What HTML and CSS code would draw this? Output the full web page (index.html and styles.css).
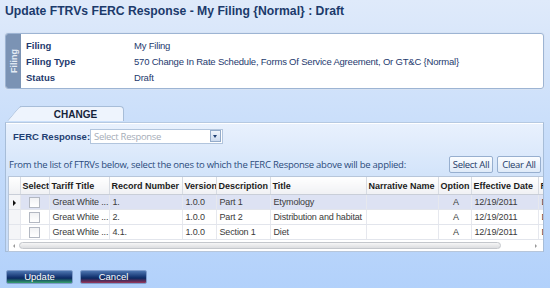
FILE: index.html
```html
<!DOCTYPE html>
<html lang="en">
<head>
    <meta charset="UTF-8">
    <title>Update FTRVs FERC Response</title>
    <link rel="stylesheet" href="styles.css">
</head>
<body>
    <div class="page">
        <h1 class="page-title">Update FTRVs FERC Response - My Filing {Normal} : Draft</h1>

        <!-- filing summary -->
        <div class="filing-box">
            <div class="filing-side"><span>Filing</span></div>
            <div class="filing-info">
                <div class="info-row"><span class="info-label">Filing</span><span class="info-value">My Filing</span></div>
                <div class="info-row"><span class="info-label">Filing Type</span><span class="info-value">570 Change In Rate Schedule, Forms Of Service Agreement, Or GT&amp;C {Normal}</span></div>
                <div class="info-row"><span class="info-label">Status</span><span class="info-value">Draft</span></div>
            </div>
        </div>

        <!-- change tab -->
        <div class="tabs">
            <div class="tab">CHANGE</div>
        </div>
        <div class="tab-panel">
            <div class="ferc-row">
                <label class="ferc-label">FERC Response:</label>
                <div class="select">
                    <span class="select-text">Select Response</span>
                    <span class="select-btn"></span>
                </div>
            </div>

            <div class="hint-row">
                <span class="hint">From the list of FTRVs below, select the ones to which the FERC Response above will be applied:</span>
                <div class="hint-btns">
                    <button class="light-btn">Select All</button>
                    <button class="light-btn">Clear All</button>
                </div>
            </div>

            <div class="grid-wrap">
                <div class="grid-clip">
                    <table class="grid">
                        <colgroup>
                            <col style="width:11px">
                            <col style="width:29px">
                            <col style="width:60px">
                            <col style="width:73px">
                            <col style="width:34px">
                            <col style="width:54px">
                            <col style="width:96px">
                            <col style="width:72px">
                            <col style="width:33px">
                            <col style="width:67px">
                            <col style="width:40px">
                        </colgroup>
                        <thead>
                            <tr>
                                <th></th>
                                <th>Select</th>
                                <th>Tariff Title</th>
                                <th>Record Number</th>
                                <th>Version</th>
                                <th>Description</th>
                                <th>Title</th>
                                <th>Narrative Name</th>
                                <th>Option</th>
                                <th>Effective Date</th>
                                <th>Reason</th>
                            </tr>
                        </thead>
                        <tbody>
                            <tr class="current">
                                <td class="ind"><span class="arrow"></span></td>
                                <td class="chk"><span class="box"></span></td>
                                <td>Great White ...</td>
                                <td>1.</td>
                                <td>1.0.0</td>
                                <td>Part 1</td>
                                <td>Etymology</td>
                                <td></td>
                                <td class="mid">A</td>
                                <td>12/19/2011</td>
                                <td>D</td>
                            </tr>
                            <tr>
                                <td class="ind"></td>
                                <td class="chk"><span class="box"></span></td>
                                <td>Great White ...</td>
                                <td>2.</td>
                                <td>1.0.0</td>
                                <td>Part 2</td>
                                <td>Distribution and habitat</td>
                                <td></td>
                                <td class="mid">A</td>
                                <td>12/19/2011</td>
                                <td>D</td>
                            </tr>
                            <tr>
                                <td class="ind"></td>
                                <td class="chk"><span class="box"></span></td>
                                <td>Great White ...</td>
                                <td>4.1.</td>
                                <td>1.0.0</td>
                                <td>Section 1</td>
                                <td>Diet</td>
                                <td></td>
                                <td class="mid">A</td>
                                <td>12/19/2011</td>
                                <td>D</td>
                            </tr>
                        </tbody>
                    </table>
                </div>
                <div class="hscroll">
                    <span class="sc-left"></span>
                    <span class="sc-track"></span>
                    <span class="sc-right"></span>
                </div>
            </div>
        </div>

        <div class="footer">
            <button class="dark-btn ok">Update</button>
            <button class="dark-btn cancel">Cancel</button>
        </div>
    </div>
</body>
</html>
```

FILE: styles.css
```css
html, body {
    margin: 0;
    height: 100%;
}
body {
    font-family: "Open Sans", "Liberation Sans", sans-serif;
    font-size: 10px;
    color: #1e3a66;
    background: linear-gradient(#dfeafa, #c9defa 45%, #b2d1fb);
}
.page {
    padding: 0 6px 0 5px;
}
.page-title {
    margin: 0;
    padding: 4px 0 0 0;
    height: 24px;
    font-family: "Liberation Sans", sans-serif;
    font-size: 12.2px;
    font-weight: bold;
    color: #1b3a6b;
}

/* filing summary */
.filing-box {
    display: flex;
    height: 54px;
    margin-top: 5px;
    border: 1px solid #9db4d3;
    border-radius: 3px;
    background: #fff;
    box-shadow: 0 0 0 1px #d6e3f5;
}
.filing-side {
    width: 15px;
    background: #7b93b4;
    display: flex;
    align-items: center;
    justify-content: center;
    border-radius: 2px 0 0 2px;
}
.filing-side span {
    transform: rotate(-90deg);
    color: #e4ebf4;
    font-family: "Liberation Sans", sans-serif;
    font-weight: bold;
    font-size: 9px;
    white-space: nowrap;
}
.filing-info {
    display: flex;
    flex-direction: column;
    justify-content: center;
    gap: 1px;
    padding-left: 5px;
}
.info-row {
    display: flex;
    height: 15px;
    align-items: center;
}
.info-label {
    width: 108px;
    font-family: "Liberation Sans", sans-serif;
    font-size: 9.5px;
    font-weight: bold;
    color: #1e3a6e;
}
.info-value {
    color: #1e3a6e;
    font-family: "Liberation Sans", sans-serif;
    font-size: 9.5px;
    letter-spacing: -0.2px;
}

/* tab */
.tabs {
    display: flex;
    margin-top: 17px;
    padding-left: 15px;
    height: 16px;
}
.tab {
    position: relative;
    width: 104px;
    height: 15px;
    border: 1px solid #a7bdd8;
    border-left: none;
    border-bottom: none;
    border-radius: 0 4px 0 0;
    background: #eef4fd;
    font-family: "Liberation Sans", sans-serif;
    font-weight: bold;
    font-size: 10px;
    color: #15233a;
    text-align: center;
    line-height: 15px;
    padding-left: 8px;
    box-sizing: border-box;
}
.tab::before {
    content: "";
    position: absolute;
    left: -13px;
    top: -1px;
    bottom: 0;
    width: 16px;
    border-top: 1px solid #a7bdd8;
    border-left: 1px solid #a7bdd8;
    border-radius: 3px 0 0 0;
    background: #eef4fd;
    transform: skewX(-40deg);
    transform-origin: bottom left;
}
.tab-panel {
    height: 130px;
    box-sizing: border-box;
    border: 1px solid #a7bdd8;
    border-top-color: #b6c9e1;
    background: linear-gradient(#e9f1fd, #d3e4fa 40%, #c6dbf8);
    padding: 5px 0 0 2px;
    box-shadow: inset 0 1px 0 #fff;
}
.ferc-row {
    display: flex;
    align-items: center;
    padding-left: 5px;
    height: 16px;
}
.ferc-label {
    width: 77px;
    white-space: nowrap;
    font-weight: bold;
    font-family: "Liberation Sans", sans-serif;
    font-size: 9.5px;
    color: #1f3f72;
}
.select {
    display: flex;
    align-items: center;
    justify-content: space-between;
    width: 133px;
    height: 15px;
    border: 1px solid #b2c5dd;
    background: #fff;
    box-sizing: border-box;
    padding-left: 3px;
}
.select-text {
    color: #a6adb8;
    font-size: 9.5px;
    letter-spacing: -0.3px;
}
.select-btn {
    position: relative;
    width: 9px;
    height: 10px;
    margin-right: 1px;
    border: 1px solid #94abc9;
    background: linear-gradient(#eef3fb, #cddbef);
}
.select-btn::after {
    content: "";
    position: absolute;
    left: 2px;
    top: 4px;
    border: 2.5px solid transparent;
    border-top: 3px solid #1f3f72;
    border-bottom: none;
}

.hint-row {
    display: flex;
    align-items: center;
    justify-content: space-between;
    margin-top: 12px;
    height: 17px;
    padding-right: 2px;
}
.hint {
    padding-left: 1px;
    font-size: 9.5px;
    letter-spacing: -0.25px;
    color: #2b4b7c;
}
.hint-btns {
    display: flex;
    gap: 4px;
}
.light-btn {
    width: 44px;
    height: 17px;
    padding: 0;
    border: 1px solid #97afcf;
    border-radius: 2px;
    background: linear-gradient(#fbfdff, #dfeaf8);
    font-family: "Open Sans", "Liberation Sans", sans-serif;
    font-size: 9.5px;
    letter-spacing: -0.3px;
    color: #1e3a66;
}

/* grid */
.grid-wrap {
    margin-top: 3px;
    border: 1px solid #b7c6da;
    border-right: none;
    background: #fff;
}
.grid-clip {
    overflow: hidden;
}
.grid {
    border-collapse: collapse;
    table-layout: fixed;
    width: 569px;
    font-family: "Liberation Sans", sans-serif;
    font-size: 9px;
    color: #333;
}
.grid th {
    height: 17px;
    padding: 0 2px;
    text-align: left;
    font-size: 9px;
    font-weight: bold;
    color: #1c1c1c;
    background: linear-gradient(#fff, #f0f1f4);
    border-right: 1px solid #d7dbe2;
    border-bottom: 1px solid #c9ced8;
    white-space: nowrap;
    overflow: hidden;
}
.grid td {
    height: 14px;
    padding: 0 0 0 3px;
    letter-spacing: -0.15px;
    border-right: 1px solid #e6e8ee;
    border-bottom: 1px solid #e2e5ec;
    white-space: nowrap;
    overflow: hidden;
    color: #3a3a3a;
}
.grid td.ind {
    background: #f4f5f8;
    padding: 0;
    text-align: center;
}
.grid tr.current td {
    background: #dde2f3;
}
.grid tr.current td.ind {
    background: #f4f5f8;
}
.grid td.mid {
    text-align: center;
}
.grid td.chk {
    text-align: center;
    padding: 0;
}
.arrow {
    display: inline-block;
    border: 3px solid transparent;
    border-left: 3px solid #111;
    border-right: none;
    vertical-align: middle;
}
.box {
    display: inline-block;
    width: 9px;
    height: 9px;
    border: 1px solid #b3b8c2;
    background: linear-gradient(#f1f2f4, #fff);
    vertical-align: middle;
}
.hscroll {
    display: flex;
    align-items: center;
    height: 11px;
    padding: 0 4px;
    gap: 4px;
}
.sc-left, .sc-right {
    width: 0;
    height: 0;
    border: 2px solid transparent;
}
.sc-left {
    border-right: 2px solid #999;
    border-left: none;
}
.sc-right {
    border-left: 2px solid #999;
    border-right: none;
    margin-left: auto;
    margin-right: 2px;
}
.sc-track {
    width: 480px;
    height: 5px;
    border: 1px solid #c4c7cc;
    border-radius: 4px;
    background: linear-gradient(#f6f6f6, #dcdde0);
}

/* footer */
.footer {
    display: flex;
    gap: 7px;
    margin-top: 18px;
    padding-left: 1px;
}
.dark-btn {
    width: 67px;
    height: 14px;
    padding: 0;
    border: 1px solid #7e9ccc;
    border-radius: 2px;
    font-family: "Liberation Sans", sans-serif;
    font-size: 9.5px;
    color: #fff;
    line-height: 12px;
}
.dark-btn.ok {
    background: linear-gradient(#4d75b0, #1a3b78 45%, #0c2a62 60%, #2d8a6a 92%, #3aa070);
}
.dark-btn.cancel {
    background: linear-gradient(#4d75b0, #1a3b78 45%, #0c2a62 60%, #7a3058 92%, #a04060);
}
```
